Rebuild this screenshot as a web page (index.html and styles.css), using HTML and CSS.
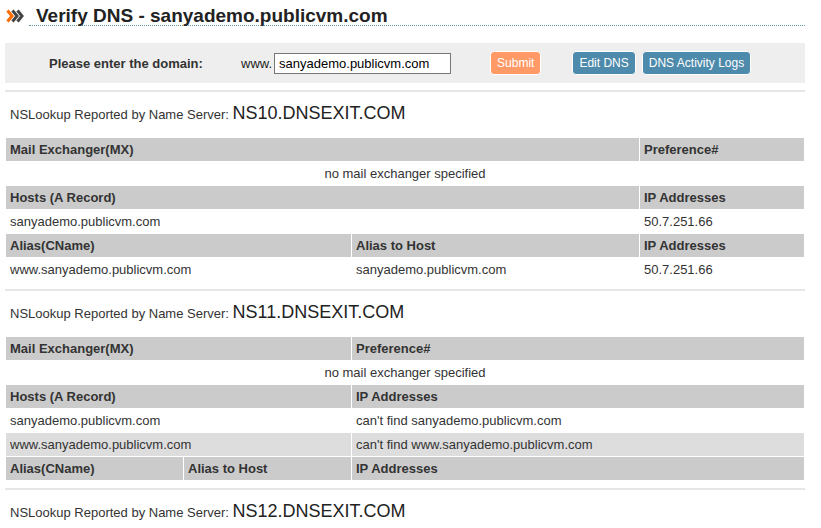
FILE: index.html
```html
<!DOCTYPE html>
<html>
<head>
<meta charset="utf-8">
<title>Verify DNS</title>
<link rel="stylesheet" href="styles.css">
</head>
<body>
<div class="page">
  <div class="title-row">
    <svg class="chev" width="18" height="14" viewBox="0 0 18 14">
      <polyline points="1.5,1.5 6,7 1.5,12.5" fill="none" stroke="#ff6a00" stroke-width="3"/>
      <polyline points="6.5,1.5 11,7 6.5,12.5" fill="none" stroke="#444" stroke-width="3"/>
      <polyline points="11.5,1.5 16,7 11.5,12.5" fill="none" stroke="#444" stroke-width="3"/>
    </svg>
    <h1 class="title">Verify DNS - sanyademo.publicvm.com</h1>
  </div>

  <form class="domain-panel">
    <span class="label">Please enter the domain:</span>
    <span class="www">www.</span>
    <input class="domain-input" type="text" value="sanyademo.publicvm.com">
    <button type="button" class="btn btn-orange btn-submit">Submit</button>
    <button type="button" class="btn btn-blue btn-edit">Edit DNS</button>
    <button type="button" class="btn btn-blue btn-logs">DNS Activity Logs</button>
  </form>

  <div class="section">
    <p class="ns">NSLookup Reported by Name Server: <span class="ns-name">NS10.DNSEXIT.COM</span></p>
    <table class="dns">
      <colgroup><col class="c1a"><col class="c2a"><col class="c3a"></colgroup>
      <tr class="head"><td colspan="2">Mail Exchanger(MX)</td><td>Preference#</td></tr>
      <tr><td colspan="3" class="center">no mail exchanger specified</td></tr>
      <tr class="head"><td colspan="2">Hosts (A Record)</td><td>IP Addresses</td></tr>
      <tr><td colspan="2">sanyademo.publicvm.com</td><td>50.7.251.66</td></tr>
      <tr class="head"><td>Alias(CName)</td><td>Alias to Host</td><td>IP Addresses</td></tr>
      <tr><td>www.sanyademo.publicvm.com</td><td>sanyademo.publicvm.com</td><td>50.7.251.66</td></tr>
    </table>
  </div>

  <div class="section">
    <p class="ns">NSLookup Reported by Name Server: <span class="ns-name">NS11.DNSEXIT.COM</span></p>
    <table class="dns">
      <colgroup><col class="c1b"><col class="c2b"><col class="c3b"></colgroup>
      <tr class="head"><td colspan="2">Mail Exchanger(MX)</td><td>Preference#</td></tr>
      <tr><td colspan="3" class="center">no mail exchanger specified</td></tr>
      <tr class="head"><td colspan="2">Hosts (A Record)</td><td>IP Addresses</td></tr>
      <tr><td colspan="2">sanyademo.publicvm.com</td><td>can't find sanyademo.publicvm.com</td></tr>
      <tr class="alt"><td colspan="2">www.sanyademo.publicvm.com</td><td>can't find www.sanyademo.publicvm.com</td></tr>
      <tr class="head"><td>Alias(CName)</td><td>Alias to Host</td><td>IP Addresses</td></tr>
    </table>
  </div>

  <div class="section">
    <p class="ns">NSLookup Reported by Name Server: <span class="ns-name">NS12.DNSEXIT.COM</span></p>
  </div>
</div>
</body>
</html>
```

FILE: styles.css
```css
* { box-sizing: border-box; }

html, body {
  margin: 0;
  padding: 0;
  background: #fff;
}

body {
  font-family: "Liberation Sans", Arial, sans-serif;
  font-size: 13px;
  color: #333;
}

.page {
  width: 800px;
  margin-left: 5px;
}

.title-row {
  display: flex;
  align-items: flex-start;
  padding-top: 6px;
}

.chev {
  display: block;
  margin: 3px 5px 0 1px;
  flex: none;
}

.title {
  flex: 1;
  margin: 0;
  padding-left: 7px;
  font-size: 19px;
  line-height: 19px;
  font-weight: bold;
  color: #222;
  border-bottom: 1px dotted #5f9aa3;
}

.domain-panel {
  display: flex;
  align-items: center;
  height: 40px;
  margin: 17px 0 0 0;
  padding-left: 44px;
  background: #eeeeee;
}

.label {
  width: 192px;
  font-weight: bold;
  color: #333;
}

.www { color: #222; }

.domain-input {
  width: 177px;
  height: 21px;
  margin: 0 0 0 2px;
  padding: 0 0 0 4px;
  border: 1px solid #767676;
  font-family: "Liberation Sans", Arial, sans-serif;
  font-size: 13px;
  color: #000;
  background: #fff;
}

.btn {
  height: 24px;
  padding: 0 6px;
  border: 1px solid #fff;
  border-radius: 4px;
  font-family: "Liberation Sans", Arial, sans-serif;
  font-size: 12px;
  line-height: 22px;
  color: #fff;
}

.btn-orange { background: #ff9966; }
.btn-blue { background: #4d8aab; }

.btn-submit { margin-left: 39px; }
.btn-edit { margin-left: 31px; }
.btn-logs { margin-left: 6px; }

.section {
  margin-top: 7px;
  border-top: 2px solid #e6e6e6;
}

.ns {
  margin: 0;
  padding: 11px 0 12px 5px;
  line-height: 20px;
  font-size: 13px;
  color: #333;
}

.ns-name {
  font-size: 18px;
  color: #222;
}

.dns {
  width: 100%;
  border-collapse: separate;
  border-spacing: 1px;
  table-layout: fixed;
}

.dns td {
  height: 23px;
  padding: 0 4px;
  line-height: 15px;
  vertical-align: middle;
  white-space: nowrap;
  color: #333;
}

.dns .head td {
  background: #cbcbcb;
  font-weight: bold;
}

.dns .alt td { background: #dddddd; }

.dns .center { text-align: center; }

.c1a { width: 345px; }
.c2a { width: 287px; }
.c3a { width: 164px; }

.c1b { width: 177px; }
.c2b { width: 167px; }
.c3b { width: 452px; }
```
